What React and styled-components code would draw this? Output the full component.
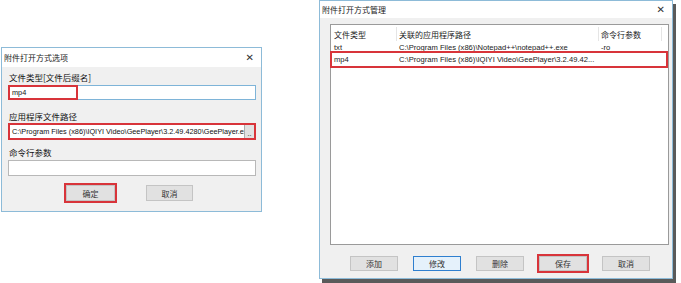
import React from "react";
import styled, { createGlobalStyle } from "styled-components";

const Global = createGlobalStyle`
  html, body { margin: 0; padding: 0; background: #fff; }
  body { font-family: "Noto Sans CJK SC", "Liberation Sans", sans-serif; color: #1a1a1a; }
  * { box-sizing: border-box; }
`;

const Page = styled.div`
  display: flex;
  align-items: flex-start;
  width: 681px;
  height: 283px;
  overflow: hidden;
`;

const Dialog = styled.div`
  display: flex;
  flex-direction: column;
  width: ${p => p.$w}px;
  height: ${p => p.$h}px;
  margin-top: ${p => p.$top}px;
  margin-left: ${p => p.$left}px;
  border: 1px solid #8dbbd8;
  background: #f0f0f0;
  box-shadow: ${p => (p.$shadow ? "3px 4px 0 #5a5a5a" : "none")};
`;

const TitleBar = styled.div`
  display: flex;
  align-items: center;
  justify-content: space-between;
  height: ${p => p.$h}px;
  background: #fff;
  padding: 0 7px 0 2px;
  font-size: 8px;
  line-height: 1;
  color: #222;
`;

const Close = styled.span`
  font-family: "DejaVu Sans", sans-serif;
  font-size: 10px;
  color: #333;
`;

const Body = styled.div`
  flex: 1;
  display: flex;
  flex-direction: column;
  padding: ${p => p.$pad};
`;

const Label = styled.div`
  font-size: 8.5px;
  line-height: 10px;
  height: 10px;
  margin-top: ${p => p.$mt || 0}px;
  padding-left: 1px;
  color: #111;
`;

const Field = styled.div`
  display: flex;
  align-items: stretch;
  height: ${p => p.$h || 15}px;
  margin-top: ${p => p.$mt || 3}px;
  background: #fff;
  border: ${p => (p.$red ? "2px solid #d8343a" : "1px solid " + (p.$focus ? "#7eb4d8" : "#b8b8b8"))};
  font-family: "Liberation Sans", sans-serif;
  font-size: 7.3px;
  color: #111;
`;

const Mark = styled.span`
  display: flex;
  align-items: center;
  width: 70px;
  margin: -1px;
  padding-left: 2px;
  border: 2px solid #d8343a;
`;

const PathText = styled.span`
  flex: 1;
  display: flex;
  align-items: center;
  padding-left: 2px;
  white-space: nowrap;
  overflow: hidden;
`;

const Browse = styled.span`
  width: 10px;
  display: flex;
  align-items: flex-end;
  justify-content: center;
  background: #e1e1e1;
  border-left: 1px solid #adadad;
  font-size: 7px;
  line-height: 9px;
`;

const ButtonRow = styled.div`
  display: flex;
  gap: ${p => p.$gap}px;
  margin-top: ${p => p.$mt}px;
  padding-left: ${p => p.$pl}px;
`;

const Button = styled.div`
  display: flex;
  align-items: center;
  justify-content: center;
  width: ${p => p.$w}px;
  height: ${p => p.$h}px;
  font-size: 8px;
  color: #333;
  background: ${p => (p.$focus ? "#e5f1fb" : "#e1e1e1")};
  border: 1px solid ${p => (p.$focus ? "#2f7fcf" : "#c4c4c4")};
  outline: ${p => (p.$red ? "2px solid #d8343a" : "none")};
  outline-offset: 0px;
`;

const List = styled.div`
  display: flex;
  flex-direction: column;
  height: 221px;
  background: #fff;
  border: 1px solid #9a9a9a;
  padding-top: 2px;
`;

const Row = styled.div`
  display: grid;
  grid-template-columns: 65px 202px 63px 1fr;
  height: ${p => p.$h}px;
  align-items: center;
  font-size: ${p => (p.$head ? "8px" : "7.6px")};
  font-family: ${p => (p.$head ? `"Noto Sans CJK SC", sans-serif` : `"Liberation Sans", sans-serif`)};
  color: #222;
  margin: 0 2px 0 1px;
  outline: ${p => (p.$red ? "2px solid #d8343a" : "none")};
`;

const Cell = styled.span`
  padding-left: 2px;
  height: 100%;
  display: flex;
  align-items: center;
  white-space: nowrap;
  overflow: hidden;
  border-right: ${p => (p.$sep ? "1px solid #e5e5e5" : "none")};
`;

export default function App() {
  return (
    <Page>
      <Global />
      <Dialog $w={261} $h={165} $top={47} $left={1}>
        <TitleBar $h={19}>
          <span>附件打开方式选项</span>
          <Close>✕</Close>
        </TitleBar>
        <Body $pad="5px 5px 0 6px">
          <Label>文件类型[文件后缀名]</Label>
          <Field $focus>
            <Mark>mp4</Mark>
          </Field>
          <Label $mt={11}>应用程序文件路径</Label>
          <Field $red $h={17} $mt={2}>
            <PathText>C:\Program Files (x86)\IQIYI Video\GeePlayer\3.2.49.4280\GeePlayer.exe</PathText>
            <Browse>..</Browse>
          </Field>
          <Label $mt={7}>命令行参数</Label>
          <Field $mt={3} $h={16} />
          <ButtonRow $gap={31} $mt={9} $pl={58}>
            <Button $w={49} $h={16} $red>确定</Button>
            <Button $w={47} $h={16}>取消</Button>
          </ButtonRow>
        </Body>
      </Dialog>

      <Dialog $w={354} $h={279} $top={0} $left={57} $shadow>
        <TitleBar $h={17}>
          <span>附件打开方式管理</span>
          <Close>✕</Close>
        </TitleBar>
        <Body $pad="6px 3px 0 10px">
          <List>
            <Row $head $h={14}>
              <Cell $sep>文件类型</Cell>
              <Cell $sep>关联的应用程序路径</Cell>
              <Cell $sep>命令行参数</Cell>
              <Cell />
            </Row>
            <Row $h={12}>
              <Cell>txt</Cell>
              <Cell>C:\Program Files (x86)\Notepad++\notepad++.exe</Cell>
              <Cell>-ro</Cell>
              <Cell />
            </Row>
            <Row $h={13} $red>
              <Cell>mp4</Cell>
              <Cell>C:\Program Files (x86)\IQIYI Video\GeePlayer\3.2.49.42...</Cell>
              <Cell />
              <Cell />
            </Row>
          </List>
          <ButtonRow $gap={15} $mt={11} $pl={20}>
            <Button $w={48} $h={15}>添加</Button>
            <Button $w={48} $h={15} $focus>修改</Button>
            <Button $w={48} $h={15}>删除</Button>
            <Button $w={48} $h={15} $red>保存</Button>
            <Button $w={48} $h={15}>取消</Button>
          </ButtonRow>
        </Body>
      </Dialog>
    </Page>
  );
}
